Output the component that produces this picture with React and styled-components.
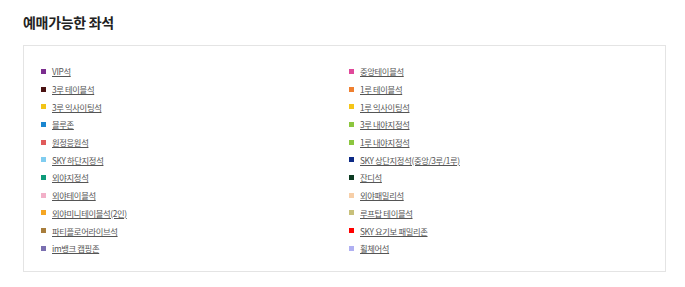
import React from 'react'
import styled, { createGlobalStyle } from 'styled-components'

const GlobalStyle = createGlobalStyle`
    body {
        margin: 0;
        background: #fff;
        font-family: "Noto Sans CJK KR", "Noto Sans", sans-serif;
    }
`

// seats listed row by row: left column, then right column
const seats = [
    { name: 'VIP석', color: '#7b2d8e' },
    { name: '중앙테이블석', color: '#e0489a' },
    { name: '3루 테이블석', color: '#4a1212' },
    { name: '1루 테이블석', color: '#ef8030' },
    { name: '3루 익사이팅석', color: '#f2c417' },
    { name: '1루 익사이팅석', color: '#f5c518' },
    { name: '블루존', color: '#1a86d0' },
    { name: '3루 내야지정석', color: '#8cc63f' },
    { name: '원정응원석', color: '#e05a5a' },
    { name: '1루 내야지정석', color: '#8cc63f' },
    { name: 'SKY 하단지정석', color: '#80cdf0' },
    { name: 'SKY 상단지정석(중앙/3루/1루)', color: '#0d2a85' },
    { name: '외야지정석', color: '#0d9b7a' },
    { name: '잔디석', color: '#0d3b22' },
    { name: '외야테이블석', color: '#f2b0c8' },
    { name: '외야패밀리석', color: '#f7cfa8' },
    { name: '외야미니테이블석(2인)', color: '#f5a623' },
    { name: '루프탑 테이블석', color: '#c8c07a' },
    { name: '파티플로어라이브석', color: '#a87d3b' },
    { name: 'SKY 요기보 패밀리존', color: '#ff0000' },
    { name: 'im뱅크 캠핑존', color: '#7a6fb0' },
    { name: '휠체어석', color: '#b0b0f2' },
]

function App() {
    return (
        <>
            <GlobalStyle />
            <Wrap>
                <Title>예매가능한 좌석</Title>
                <Box>
                    <SeatList>
                        {seats.map(seat => (
                            <Seat key={seat.name}>
                                <Swatch color={seat.color} />
                                <SeatLink href="#">{seat.name}</SeatLink>
                            </Seat>
                        ))}
                    </SeatList>
                </Box>
            </Wrap>
        </>
    )
}

export default App

const Wrap = styled.div`
    padding: 11px 20px 0 23px;
    width: 643px;
`

const Title = styled.h2`
    margin: 0 0 12px;
    font-size: 14px;
    font-weight: 700;
    color: #222;
    line-height: 22px;
    letter-spacing: -0.3px;
`

const Box = styled.div`
    border: 1px solid #e4e4e4;
    padding: 16.5px 0 14.5px 17px;
    height: 194px;
`

const SeatList = styled.ul`
    list-style: none;
    margin: 0;
    padding: 0;
    display: grid;
    grid-template-columns: 308px 1fr;
    grid-auto-rows: 17.7px;
`

const Seat = styled.li`
    display: flex;
    align-items: center;
    gap: 6px;
`

const Swatch = styled.span`
    width: 5px;
    height: 5px;
    background: ${props => props.color};
    flex-shrink: 0;
`

const SeatLink = styled.a`
    font-size: 8.3px;
    color: #555;
    text-decoration: underline;
    letter-spacing: -0.35px;
`
